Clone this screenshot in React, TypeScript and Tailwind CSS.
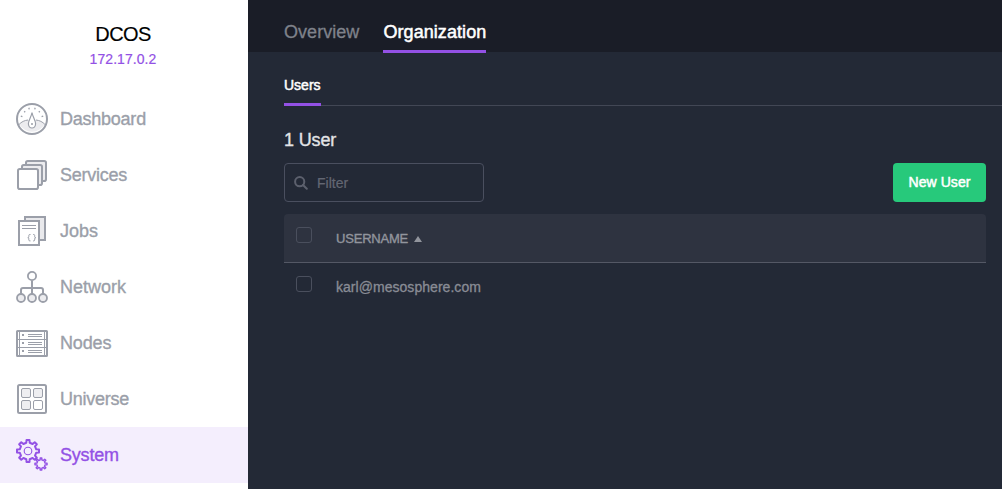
import type { ReactNode } from "react";

function gear(cx: number, cy: number, outer: number, inner: number, teeth: number) {
  const points: string[] = [];
  const step = (Math.PI * 2) / teeth;
  const at = (r: number, a: number) =>
    `${(cx + r * Math.cos(a)).toFixed(2)},${(cy + r * Math.sin(a)).toFixed(2)}`;
  for (let i = 0; i < teeth; i++) {
    const a = i * step - Math.PI / 2;
    points.push(at(inner, a - step * 0.26), at(outer, a - step * 0.17), at(outer, a + step * 0.17), at(inner, a + step * 0.26));
  }
  return `M${points.join("L")}Z`;
}

function Icon({ children }: { children: ReactNode }) {
  return (
    <svg className="size-8 shrink-0" viewBox="0 0 32 32" fill="none" stroke="currentColor" strokeWidth="2">
      {children}
    </svg>
  );
}

const DashboardIcon = () => (
  <Icon>
    <path d="M3.5 21.5Q7 17.8 11 17.2H21Q25 17.8 28.5 21.5A14.5 14.5 0 0 1 3.5 21.5Z" fill="#ececef" stroke="none" />
    <path d="M3 21.5C5.5 18.8 8.5 17.4 12 17M20 17c3.500.4 6.500 1.800 9 4.500" strokeWidth="1" />
    <path d="M16 9.500c.5 4 3.600 7.500 3.600 11.200a3.600 4.300 0 0 1-7.200 0c0-3.700 3.100-7.200 3.600-11.200Z" fill="#fff" strokeWidth="1.200" />
    <circle cx="16" cy="21" r="1" fill="currentColor" stroke="none" />
    <path d="M4.800 13.200l1.600.5M8.200 8.200l1 1M12.800 4.800l.5 1.600M19.200 4.800l-.5 1.600M23.800 8.200l-1 1M27.200 13.200l-1.600.5" strokeWidth="1.300" />
    <circle cx="16" cy="16" r="15" />
  </Icon>
);

const ServicesIcon = () => (
  <Icon>
    <rect x="10" y="2" width="20" height="20" rx="1.800" fill="#ececef" />
    <rect x="6" y="6" width="20" height="20" rx="1.800" fill="#ececef" />
    <rect x="2" y="10" width="20" height="20" rx="1.800" fill="#fff" />
  </Icon>
);

const JobsIcon = () => (
  <Icon>
    <path d="M9 2H29V25H9Z" fill="#e9e9ec" />
    <path d="M3 6H23V30H3Z" fill="#fff" />
    <path d="M6 10.500H20M6 13.500H20" strokeWidth="1" />
    <path d="M14.500 19.500h-.7q-1 0-1 1v1.200q0 1-1 1 1 0 1 1v1.200q0 1 1 1h.7M17 19.500h.7q1 0 1 1v1.200q0 1 1 1-1 0-1 1v1.200q0 1-1 1H17" strokeWidth="1" />
  </Icon>
);

const NetworkIcon = () => (
  <Icon>
    <path d="M16 9.500V23M5 23V19Q5 17 7 17H25Q27 17 27 19V23" />
    <circle cx="16" cy="5" r="4.100" fill="#fff" strokeWidth="1.800" />
    <circle cx="5" cy="27" r="4" fill="#ececef" strokeWidth="1.800" />
    <circle cx="16" cy="27" r="4" fill="#ececef" strokeWidth="1.800" />
    <circle cx="27" cy="27" r="4" fill="#ececef" strokeWidth="1.800" />
  </Icon>
);

const NodesIcon = () => (
  <Icon>
    <rect x="1" y="4" width="30" height="25" rx="0.500" />
    <path d="M3.500 5V28M28.500 5V28M2 12.500H30M2 20.500H30" strokeWidth="1" />
    <path d="M12 7.500H26M12 9.500H26M12 15.500H26M12 17.500H26M12 23.500H26M12 25.500H26" strokeWidth="1" />
    <path d="M6 8h2M6 16h2M6 24h2" />
  </Icon>
);

const UniverseIcon = () => (
  <Icon>
    <rect x="2" y="2" width="28" height="28" rx="1.500" />
    <g strokeWidth="1" fill="#eeeef1">
      <rect x="5.500" y="5.500" width="9" height="9" rx="1.500" />
      <rect x="17.500" y="5.500" width="9" height="9" rx="1.500" />
      <rect x="5.500" y="17.500" width="9" height="9" rx="1.500" />
      <rect x="17.500" y="17.500" width="9" height="9" rx="1.500" fill="#fff" />
    </g>
  </Icon>
);

const SystemIcon = () => (
  <Icon>
    <path d={gear(12, 12, 11.1, 8.4, 8)} strokeWidth="2" strokeLinejoin="round" />
    <circle cx="12" cy="12" r="3.800" strokeWidth="1.100" />
    <path d={gear(25, 25, 6.1, 4.2, 8)} strokeWidth="1.400" strokeLinejoin="round" />
  </Icon>
);

const items = [
  { label: "Dashboard", icon: DashboardIcon, tracking: "tracking-[-0.24px]" },
  { label: "Services", icon: ServicesIcon, tracking: "tracking-[-0.25px]" },
  { label: "Jobs", icon: JobsIcon, tracking: "tracking-normal" },
  { label: "Network", icon: NetworkIcon, tracking: "tracking-[0px]" },
  { label: "Nodes", icon: NodesIcon, tracking: "tracking-[-0.15px]" },
  { label: "Universe", icon: UniverseIcon, tracking: "tracking-[-0.25px]" },
  { label: "System", icon: SystemIcon, tracking: "tracking-[-0.2px]" },
];

function Sidebar() {
  return (
    <aside className="flex w-[248px] shrink-0 flex-col bg-white">
      <header className="flex h-[91px] flex-col items-center pt-[22px] pr-[2px]">
        <h1 className="text-[20px] leading-6 tracking-[-0.6px] text-black [-webkit-text-stroke:0.15px_currentColor]">DCOS</h1>
        <p className="pt-[3px] text-sm leading-5 tracking-[0.07px] text-[#9351e5] [-webkit-text-stroke:0.2px_currentColor]">
          172.17.0.2
        </p>
      </header>
      <nav>
        {items.map(({ label, icon: ItemIcon, tracking }) => (
          <a
            key={label}
            className={`flex h-14 items-center gap-3 pl-4 ${
              label === "System" ? "bg-[#f4eefd] text-[#9351e5]" : "text-[#9b9fa9]"
            }`}
          >
            <ItemIcon />
            <span className={`text-lg leading-none [-webkit-text-stroke:0.35px_currentColor] ${tracking}`}>{label}</span>
          </a>
        ))}
      </nav>
    </aside>
  );
}

const Checkbox = () => <span className="block size-4 rounded-[3px] border border-[#4a4f5d]" />;

export default function App() {
  return (
    <div className="flex h-[489px] w-[1002px] overflow-hidden bg-[#232936] font-['Liberation_Sans',Arial,sans-serif]">
      <Sidebar />
      <main className="flex min-w-0 flex-1 flex-col">
        <div className="flex h-[52px] gap-6 bg-[#1a1d27] pl-9 text-lg leading-6">
          <a className="h-[53px] pt-5 tracking-[0.05px] text-[#7f828b] [-webkit-text-stroke:0.3px_currentColor]">Overview</a>
          <a className="h-[53px] border-b-3 border-[#9351e5] pt-5 tracking-[0.07px] text-white [-webkit-text-stroke:0.5px_currentColor]">
            Organization
          </a>
        </div>
        <div className="ml-9 flex h-[54px] border-b border-[#424755]">
          <a className="h-[54px] border-b-3 border-[#9351e5] pt-[23px] text-sm leading-5 text-white [-webkit-text-stroke:0.5px_currentColor]">
            Users
          </a>
        </div>
        <section className="pt-[22px] pr-4 pl-9">
          <h2 className="text-lg leading-6 tracking-[-0.15px] text-[#e2e3e6] [-webkit-text-stroke:0.35px_currentColor]">1 User</h2>
          <div className="mt-[11px] flex h-[39px] justify-between">
            <label className="flex w-[200px] items-center rounded border border-[#4a4f5f] pl-[9px]">
              <svg className="size-[14px] text-[#5c606d]" viewBox="0 0 14 14" fill="none" stroke="currentColor" strokeWidth="2">
                <circle cx="5.700" cy="5.700" r="4.600" />
                <path d="M9 9l3.800 3.800" strokeLinecap="round" />
              </svg>
              <span className="pl-[9px] text-sm leading-5 text-[#636773] [-webkit-text-stroke:0.2px_currentColor]">Filter</span>
            </label>
            <button className="w-[93px] rounded bg-[#27c97b] pb-[2px] text-sm leading-5 tracking-[0.06px] text-white [-webkit-text-stroke:0.5px_currentColor]">
              New User
            </button>
          </div>
          <div className="mt-3">
            <div className="flex h-[49px] rounded-t border-b border-[#545865] bg-[#2e3340] pl-3">
              <div className="w-10 pt-[13px]">
                <Checkbox />
              </div>
              <div className="flex pt-[15px] text-[13px] leading-5 tracking-[-0.2px] text-[#92959d] [-webkit-text-stroke:0.35px_currentColor]">
                USERNAME
                <svg className="mt-[7px] ml-[6px] h-[6px] w-2" viewBox="0 0 8 6">
                  <path d="M4 0L8 6H0Z" fill="currentColor" />
                </svg>
              </div>
            </div>
            <div className="flex pl-3">
              <div className="w-10 pt-[13px]">
                <Checkbox />
              </div>
              <span className="pt-[14px] text-sm leading-5 tracking-[0.04px] text-[#898c95] [-webkit-text-stroke:0.3px_currentColor]">
                karl@mesosphere.com
              </span>
            </div>
          </div>
        </section>
      </main>
    </div>
  );
}
